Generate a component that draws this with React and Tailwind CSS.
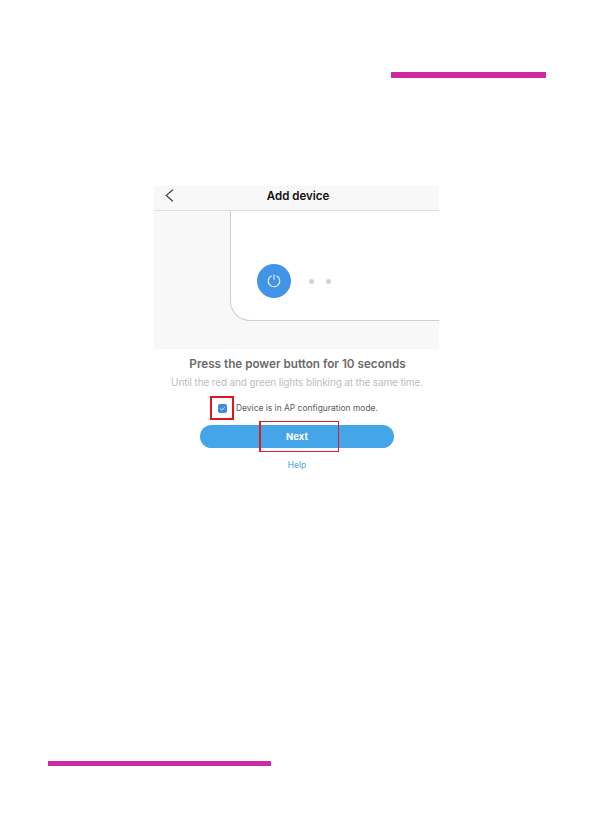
import React from "react";

const PowerIcon = () => (
  <svg width="14" height="14" viewBox="0 0 14 14" fill="none" stroke="#e6f3fd" strokeWidth="1.1" strokeLinecap="round">
    <path d="M4.2 1.9a5.8 5.8 0 1 0 5.6 0" />
    <path d="M7 0.9v4.4" />
  </svg>
);

function Header() {
  return (
    <header className="relative flex h-[25px] items-center justify-center border-b border-[#dedede] bg-[#f8f8f8] pb-[5px] pl-[3px]">
      <svg className="absolute left-[11px] top-[3px]" width="9" height="13" viewBox="0 0 9 13" fill="none" stroke="#3c3c3c" strokeWidth="1.2">
        <path d="M7.8 0.7 1.3 6.4l6.5 5.8" />
      </svg>
      <h1 className="whitespace-nowrap text-[11.5px] leading-[14px] font-semibold text-[#111]">Add device</h1>
    </header>
  );
}

function Illustration() {
  return (
    <div className="h-[138px] overflow-hidden bg-[#f8f8f8] pl-[76px]">
      <div className="flex h-[110px] items-start rounded-bl-[20px] border-b border-l border-[#cfcfcf] bg-white pl-[26px] pt-[53px]">
        <div className="flex h-[34px] w-[34px] items-center justify-center rounded-full bg-[#4294e6]">
          <PowerIcon />
        </div>
        <div className="ml-[17.5px] mt-[15px] flex gap-3">
          <span className="h-[5px] w-[5px] rounded-full bg-[#d2d2d2]" />
          <span className="h-[5px] w-[5px] rounded-full bg-[#d2d2d2]" />
        </div>
      </div>
    </div>
  );
}

export default function App() {
  return (
    <div className="flex h-[839px] w-[595px] flex-col overflow-hidden bg-white font-['Inter',sans-serif]">
      <div className="ml-[391px] mt-[72px] h-[6px] w-[155px] shrink-0 bg-[#cc29a3]" />

      <main className="ml-[154px] mt-[108px] h-[300px] w-[285px] shrink-0">
        <Header />
        <Illustration />

        <div className="flex flex-col items-center">
          <h2 className="ml-[2px] mt-[7px] whitespace-nowrap text-[11.7px] leading-4 font-semibold text-[#6a6a6a]">
            Press the power button for 10 seconds
          </h2>
          <p className="ml-[1px] mt-[2px] whitespace-nowrap text-[10px] leading-4 tracking-[-0.14px] text-[#bdbdbd]">
            Until the red and green lights blinking at the same time.
          </p>
        </div>

        <div className="ml-[56px] mt-[6px] flex h-[24px] items-center">
          <div className="flex h-[24px] w-[24px] shrink-0 items-center justify-center border-2 border-[#e0161b]">
            <span className="flex h-[9px] w-[9px] items-center justify-center rounded-[2px] bg-[#4189dc]">
              <svg width="7" height="7" viewBox="0 0 7 7" fill="none" stroke="#dcecfb" strokeWidth="1">
                <path d="m1.2 3.5 1.6 1.4 3-2.7" />
              </svg>
            </span>
          </div>
          <span className="ml-[2px] whitespace-nowrap text-[8.45px] leading-3 text-[#5c5c5c]">
            Device is in AP configuration mode.
          </span>
        </div>

        <button className="relative ml-[46px] mt-[5px] flex h-[23px] w-[194px] items-center justify-center rounded-full bg-[#45a5e9] pt-[2px] text-[9.5px] font-bold text-white">
          Next
          <span className="absolute -top-[4px] left-[59px] h-[31px] w-[80px] border border-l-2 border-[#dd1d24]" />
        </button>
        <p className="mt-[11px] pl-[1px] text-center text-[8.3px] leading-3 font-medium text-[#62aedb]">Help</p>
      </main>

      <div className="ml-[48px] mt-[275px] h-[5px] w-[223px] shrink-0 bg-[#cc29a3]" />
    </div>
  );
}
